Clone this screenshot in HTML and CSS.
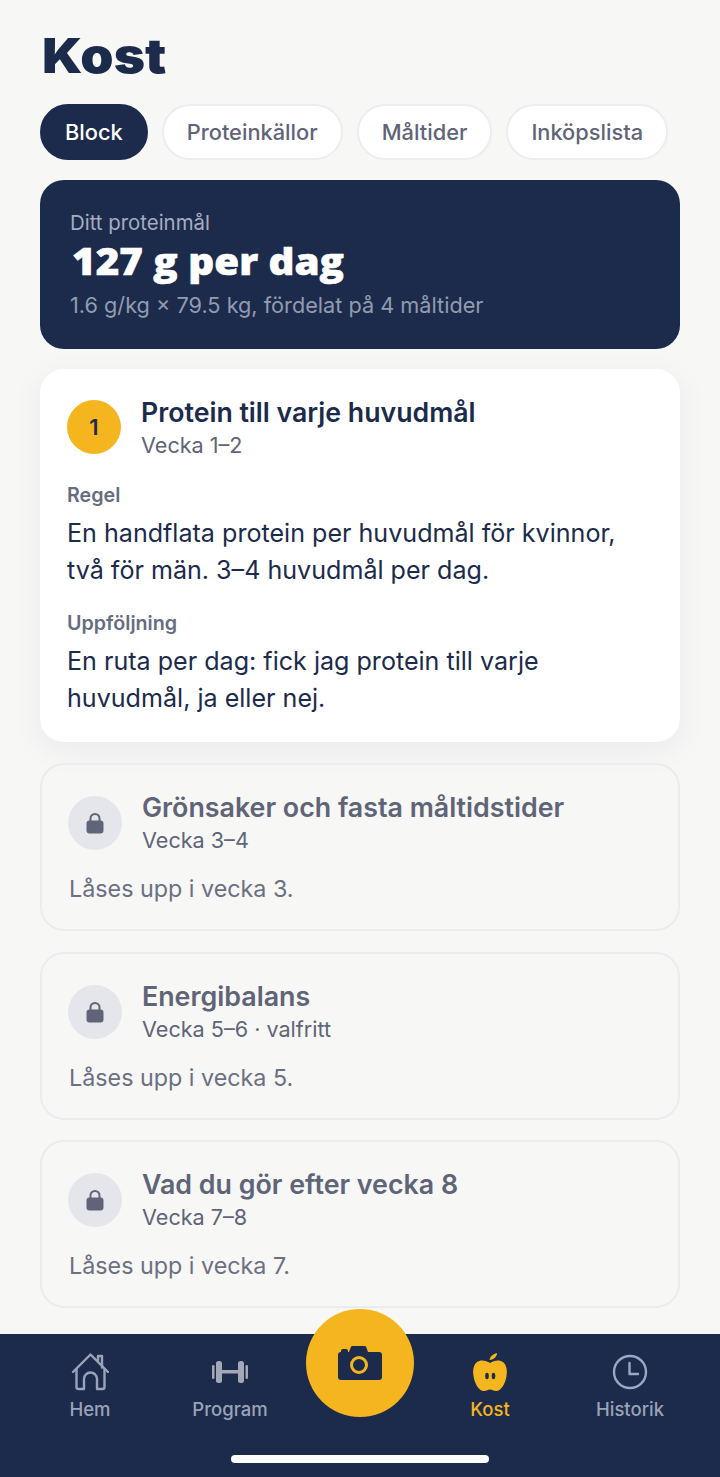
FILE: index.html
```html
<!DOCTYPE html>
<html lang="sv">
<head>
<meta charset="utf-8">
<title>Kost</title>
<link rel="stylesheet" href="styles.css">
</head>
<body>
<div class="app">
  <main class="content">
    <h1 class="page-title">Kost</h1>
    <div class="tabs">
      <button class="tab tab-active">Block</button>
      <button class="tab">Proteinkällor</button>
      <button class="tab">Måltider</button>
      <button class="tab">Inköpslista</button>
    </div>
    <section class="hero">
      <div class="hero-label">Ditt proteinmål</div>
      <div class="hero-value">127 g per dag</div>
      <div class="hero-sub">1.6 g/kg × 79.5 kg, fördelat på 4 måltider</div>
    </section>
    <section class="card">
      <div class="card-head">
        <div class="badge">1</div>
        <div>
          <div class="card-title">Protein till varje huvudmål</div>
          <div class="card-week">Vecka 1–2</div>
        </div>
      </div>
      <div class="field-label">Regel</div>
      <p class="field-text">En handflata protein per huvudmål för kvinnor, två för män. 3–4 huvudmål per dag.</p>
      <div class="field-label field-label-second">Uppföljning</div>
      <p class="field-text">En ruta per dag: fick jag protein till varje huvudmål, ja eller nej.</p>
    </section>
    <section class="locked">
      <div class="locked-head">
        <div class="lock-circle"><svg class="lock-icon" viewBox="0 0 18 22"><path d="M4.500 10V6.500a4.500 4.500 0 0 1 9 0V10" fill="none" stroke="#5f6479" stroke-width="2"/><rect x="0.500" y="8.500" width="17" height="13" rx="3" fill="#5f6479"/></svg></div>
        <div>
          <div class="locked-title">Grönsaker och fasta måltidstider</div>
          <div class="locked-week">Vecka 3–4</div>
        </div>
      </div>
      <div class="locked-note">Låses upp i vecka 3.</div>
    </section>
    <section class="locked">
      <div class="locked-head">
        <div class="lock-circle"><svg class="lock-icon" viewBox="0 0 18 22"><path d="M4.500 10V6.500a4.500 4.500 0 0 1 9 0V10" fill="none" stroke="#5f6479" stroke-width="2"/><rect x="0.500" y="8.500" width="17" height="13" rx="3" fill="#5f6479"/></svg></div>
        <div>
          <div class="locked-title">Energibalans</div>
          <div class="locked-week">Vecka 5–6 · valfritt</div>
        </div>
      </div>
      <div class="locked-note">Låses upp i vecka 5.</div>
    </section>
    <section class="locked">
      <div class="locked-head">
        <div class="lock-circle"><svg class="lock-icon" viewBox="0 0 18 22"><path d="M4.500 10V6.500a4.500 4.500 0 0 1 9 0V10" fill="none" stroke="#5f6479" stroke-width="2"/><rect x="0.500" y="8.500" width="17" height="13" rx="3" fill="#5f6479"/></svg></div>
        <div>
          <div class="locked-title">Vad du gör efter vecka 8</div>
          <div class="locked-week">Vecka 7–8</div>
        </div>
      </div>
      <div class="locked-note">Låses upp i vecka 7.</div>
    </section>
  </main>
  <nav class="nav">
    <div class="nav-item">
      <svg class="nav-icon" viewBox="0 0 40 40" fill="none" stroke="#9aa3b8" stroke-width="2.400" stroke-linejoin="round" stroke-linecap="round"><path d="M3 20 20.500 2.500 38 20"/><path d="M28 9.500V4h4v11.500"/><path d="M6.500 17v18a2 2 0 0 0 2 2H14V27a6.500 6.500 0 0 1 13 0v10h5.500a2 2 0 0 0 2-2V17"/></svg>
      <span>Hem</span>
    </div>
    <div class="nav-item">
      <svg class="nav-icon" viewBox="0 0 40 40" fill="#a3a7b6"><rect x="2" y="13" width="2.500" height="14" rx="1.200"/><rect x="6" y="9" width="6" height="22" rx="2.500"/><rect x="12" y="18" width="16" height="3.500"/><rect x="28" y="9" width="6" height="22" rx="2.500"/><rect x="35.500" y="13" width="2.500" height="14" rx="1.200"/></svg>
      <span>Program</span>
    </div>
    <div class="nav-spacer"></div>
    <div class="nav-item nav-active">
      <svg class="nav-icon" viewBox="0 0 40 40"><path d="M20 11C16 8 10 7.500 7 10 3.500 13 2.500 18 3.500 24 4.500 31 8.500 39 14 39c2.500 0 4-1.500 6-1.500s3.500 1.500 6 1.500c5.500 0 9.500-8 10.500-15 1-6 0-11-3.500-14C30 7.500 24 8 20 11Z" fill="#f5b51e"/><path d="M19.500 8c.5-3.500 3.500-6 7.500-7 0 3.500-3 6.500-7.500 7Z" fill="#f5b51e"/><ellipse cx="17" cy="24" rx="1.800" ry="3.200" fill="#1c2b4b"/><ellipse cx="23.500" cy="24" rx="1.800" ry="3.200" fill="#1c2b4b"/></svg>
      <span>Kost</span>
    </div>
    <div class="nav-item">
      <svg class="nav-icon" viewBox="0 0 40 40" fill="none" stroke="#9aa8c4" stroke-width="2.400" stroke-linecap="round" stroke-linejoin="round"><circle cx="20" cy="20" r="16"/><path d="M19.500 11v11h8.500"/></svg>
      <span>Historik</span>
    </div>
    <button class="camera" aria-label="Kamera">
      <svg class="camera-icon" viewBox="0 0 44 34"><path d="M3 6V5a2 2 0 0 1 2-2h3a2 2 0 0 1 2 2v1h1l1.500-4a2 2 0 0 1 2-2h12a2 2 0 0 1 2 2l1.500 4H41a3 3 0 0 1 3 3v22a3 3 0 0 1-3 3H3a3 3 0 0 1-3-3V9a3 3 0 0 1 3-3Z" fill="#1c2b4b"/><circle cx="21" cy="19" r="7.500" fill="none" stroke="#f5b51e" stroke-width="3"/></svg>
    </button>
    <div class="home-indicator"></div>
  </nav>
</div>
</body>
</html>
```

FILE: styles.css
```css
* { box-sizing: border-box; }
html, body { margin: 0; padding: 0; }
body {
  background: #f7f7f6;
  font-family: Inter, "Noto Sans", sans-serif;
  color: #1c2b4b;
}
.app {
  height: 1477px;
  display: flex;
  flex-direction: column;
  overflow: hidden;
}
.content {
  flex: 1;
  padding: 26px 40px 0;
  display: flex;
  flex-direction: column;
}
.page-title {
  align-self: flex-start;
  margin: 0 0 18px 2px;
  font-size: 48px;
  line-height: 60px;
  font-weight: 900;
  color: #1c2b4b;
  transform: scaleX(1.11);
  transform-origin: left center;
}
.tabs {
  display: flex;
  gap: 14px;
  margin-bottom: 20px;
}
.tab {
  height: 56px;
  padding: 0 23px;
  border-radius: 28px;
  border: 2px solid #ecedef;
  background: #fff;
  color: #5f6477;
  font-family: inherit;
  font-size: 21.800px;
  font-weight: 450;
  white-space: nowrap;
}
.tab-active {
  background: #1c2b4b;
  border-color: #1c2b4b;
  color: #fff;
}
.hero {
  height: 169px;
  border-radius: 24px;
  background: #1c2b4b;
  padding: 30px 30px 0;
  margin-bottom: 20px;
}
.hero-label {
  font-size: 20.400px;
  line-height: 25px;
  color: #a5adc0;
}
.hero-value {
  width: max-content;
  margin: 3px 0 7px 2px;
  font-family: "Open Sans", sans-serif;
  font-size: 37px;
  line-height: 46px;
  font-weight: 800;
  -webkit-text-stroke: 0.600px #fff;
  color: #fff;
  transform: scaleX(1.09);
  transform-origin: left center;
}
.hero-sub {
  font-size: 21.700px;
  line-height: 28px;
  color: #929bb0;
}
.card {
  height: 373px;
  border-radius: 24px;
  background: #fff;
  box-shadow: 0 8px 32px rgba(27, 42, 74, 0.06);
  padding: 27px 27px 0;
  margin-bottom: 21px;
}
.card-head {
  display: flex;
  gap: 20px;
  margin-bottom: 19px;
}
.badge {
  width: 54px;
  height: 54px;
  margin-top: 4px;
  border-radius: 50%;
  background: #f5b51e;
  display: flex;
  align-items: center;
  justify-content: center;
  font-size: 22px;
  font-weight: 600;
  color: #1c2b4b;
  flex-shrink: 0;
}
.card-title {
  font-size: 26.700px;
  line-height: 32px;
  font-weight: 600;
  color: #1c2b4b;
}
.card-week {
  font-size: 21.600px;
  line-height: 35px;
  color: #5f6477;
}
.field-label {
  font-size: 19.700px;
  line-height: 26px;
  font-weight: 600;
  color: #666c80;
}
.field-label-second { margin-top: 21px; }
.field-text {
  margin: 7px 0 0;
  font-size: 25.100px;
  line-height: 37px;
  color: #1c2b4b;
}
.locked {
  height: 168px;
  border: 2px solid #ebecee;
  border-radius: 24px;
  padding: 26px 26px 0;
  margin-bottom: 20.500px;
}
.locked-head {
  display: flex;
  gap: 20px;
  margin-bottom: 17px;
}
.lock-circle {
  width: 54px;
  height: 54px;
  margin-top: 5px;
  border-radius: 50%;
  background: #e5e6ec;
  display: flex;
  align-items: center;
  justify-content: center;
  flex-shrink: 0;
}
.lock-icon { width: 18px; height: 22px; }
.locked-title {
  font-size: 26.800px;
  line-height: 33px;
  font-weight: 600;
  color: #5f6477;
}
.locked-week {
  font-size: 21.600px;
  line-height: 33px;
  color: #5f6477;
}
.locked-note {
  margin-left: 1px;
  font-size: 23.300px;
  line-height: 30px;
  color: #6b7082;
}
.nav {
  position: relative;
  height: 143px;
  flex-shrink: 0;
  background: #1c2b4b;
  padding: 0 20px;
  display: grid;
  grid-template-columns: 140px 140px 120px 140px 140px;
}
.nav-item {
  padding-top: 18px;
  display: flex;
  flex-direction: column;
  align-items: center;
  font-size: 18.500px;
  font-weight: 500;
  color: #9aa3b8;
  line-height: 27px;
}
.nav-icon { width: 40px; height: 40px; margin-bottom: 4px; }
.nav-active { color: #f5b51e; }
.camera {
  position: absolute;
  left: 306px;
  top: -25px;
  width: 108px;
  height: 108px;
  border-radius: 50%;
  border: 0;
  padding: 0;
  background: #f5b51e;
  display: flex;
  align-items: center;
  justify-content: center;
}
.camera-icon { width: 44px; height: 34px; }
.home-indicator {
  position: absolute;
  left: 231px;
  bottom: 14px;
  width: 258px;
  height: 8px;
  border-radius: 4px;
  background: #fff;
}
```
